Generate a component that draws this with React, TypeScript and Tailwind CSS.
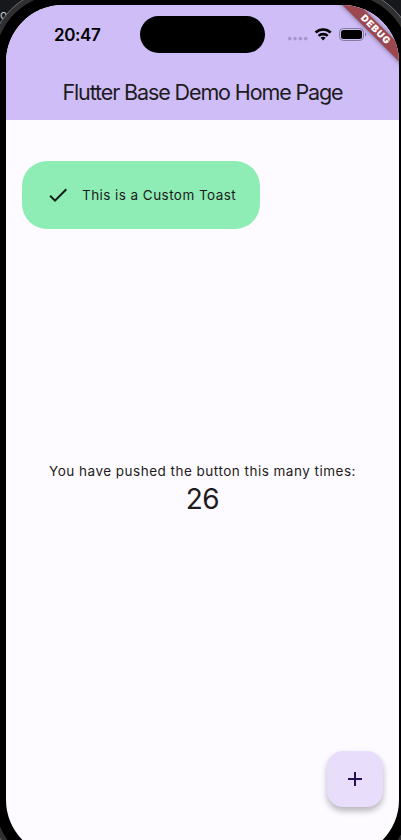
import React from "react";

function StatusBar() {
  return (
    <div className="flex h-[59px] items-start justify-between">
      <span className="w-[134px] pl-[48px] pt-[18px] text-[17px] font-semibold leading-6 tracking-[-0.4px] text-black">20:47</span>
      <div className="mt-[11px] h-[37px] w-[125px] rounded-full bg-black" />
      <svg className="h-[59px] w-[134px]" viewBox="265 5 134 59">
        <g fill="#a595cb">
          <circle cx="289.8" cy="38.6" r="1.8" />
          <circle cx="295.1" cy="38.6" r="1.8" />
          <circle cx="300.4" cy="38.6" r="1.8" />
          <circle cx="305.7" cy="38.6" r="1.8" />
        </g>
        <g fill="none" stroke="#000" strokeWidth="2.6">
          <path d="M315.6 32.5a10.9 10.9 0 0 1 15.1 0" />
          <path d="M318.6 35.9a6.6 6.6 0 0 1 9.1 0" />
        </g>
        <path d="M320.6 37.8a3.9 3.9 0 0 1 5.1 0l-2.55 2.6Z" fill="#000" />
        <rect x="339.5" y="28.5" width="24" height="12" rx="3.8" fill="none" stroke="#85799f" />
        <rect x="341" y="30" width="21" height="9" rx="2.5" />
        <path d="M365 32.5c1.7.6 1.7 3.4 0 4Z" fill="#85799f" />
      </svg>
    </div>
  );
}

function DebugBanner() {
  return (
    <div className="absolute left-[319px] top-[18px] flex h-[12px] w-[100px] rotate-45 items-center justify-center bg-[#9c4650] pl-[2px] text-[9.5px] font-black leading-none tracking-[0.9px] text-white shadow-[0_0_5px_rgba(0,0,0,0.5)]">
      DEBUG
    </div>
  );
}

function Toast() {
  return (
    <div className="ml-4 mt-[41px] flex h-[68px] w-[238px] items-center gap-3 rounded-[25px] bg-[#8eedb4] pl-6 text-[#1d1b20]">
      <svg className="size-6 shrink-0" viewBox="0 0 24 24">
        <path fill="#111d18" d="M9 16.17 4.83 12l-1.42 1.41L9 19 21 7l-1.41-1.41z" />
      </svg>
      <span className="whitespace-nowrap text-[13.5px] leading-5 tracking-[0.44px]">This is a Custom Toast</span>
    </div>
  );
}

export default function App() {
  return (
    <div className="relative h-[840px] w-[401px] overflow-hidden bg-[#17181c] font-['Inter',sans-serif]">
      <span className="absolute left-0 top-[7px] text-[12px] leading-4 text-[#c9c9cb]">o</span>
      <div className="relative -ml-[11px] -mt-[12px] h-[886px] w-[427px] rounded-[73px] border border-[#727274] bg-[#303032] p-[5px]">
        <div className="h-[874px] w-[415px] rounded-[67px] bg-black p-[11px]">
          <div className="relative flex h-[852px] w-[393px] flex-col overflow-hidden rounded-[57px] bg-[#fdfbff]">
            <header className="h-[115px] shrink-0 bg-[#cfbdf8]">
              <StatusBar />
              <h1 className="flex h-14 items-center justify-center whitespace-nowrap pb-px text-[21.5px] font-normal leading-7 tracking-[-1.12px] text-[#1d1b20]">
                Flutter Base Demo Home Page
              </h1>
            </header>
            <Toast />
            <main className="mt-[232px] flex flex-col items-center text-[#1d1b20]">
              <p className="whitespace-nowrap text-[13.5px] leading-5 tracking-[0.49px]">You have pushed the button this many times:</p>
              <p className="text-[28px] leading-9 tracking-[-0.5px]">26</p>
            </main>
            <button className="mb-[50px] mr-4 mt-auto flex size-14 items-center justify-center self-end rounded-[16px] bg-[#e8ddfb] shadow-[0_4px_6px_rgba(0,0,0,0.28)]">
              <svg className="size-6" viewBox="0 0 24 24">
                <path d="M19 13h-6v6h-2v-6H5v-2h6V5h2v6h6z" fill="#24105b" />
              </svg>
            </button>
            <DebugBanner />
          </div>
        </div>
      </div>
    </div>
  );
}
